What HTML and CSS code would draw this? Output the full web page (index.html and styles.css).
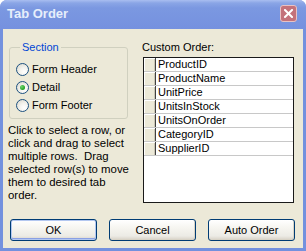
FILE: index.html
```html
<!DOCTYPE html>
<html lang="en">
<head>
    <meta charset="UTF-8">
    <title>Tab Order</title>
    <link rel="stylesheet" href="styles.css">
</head>
<body>
    <div class="window">
        <div class="titlebar">
            <span class="title">Tab Order</span>
            <span class="close">
                <svg width="9" height="9" viewBox="0 0 9 9">
                    <path d="M1 1 L8 8 M8 1 L1 8" stroke="#fff" stroke-width="2" stroke-linecap="square"/>
                </svg>
            </span>
        </div>

        <div class="client">
            <div class="top">
                <div class="left-col">
                    <fieldset class="group">
                        <legend>Section</legend>
                        <div class="radio-row"><span class="radio"></span>Form Header</div>
                        <div class="radio-row"><span class="radio checked"></span>Detail</div>
                        <div class="radio-row"><span class="radio"></span>Form Footer</div>
                    </fieldset>
                    <p class="help">Click to select a row, or<br>click and drag to select<br>multiple rows.&nbsp; Drag<br>selected row(s) to move<br>them to desired tab<br>order.</p>
                </div>

                <div class="right-col">
                    <div class="list-label">Custom Order:</div>
                    <div class="list">
                        <div class="row"><span class="sel"></span><span class="name">ProductID</span></div>
                        <div class="row"><span class="sel"></span><span class="name">ProductName</span></div>
                        <div class="row"><span class="sel"></span><span class="name">UnitPrice</span></div>
                        <div class="row"><span class="sel"></span><span class="name">UnitsInStock</span></div>
                        <div class="row"><span class="sel"></span><span class="name">UnitsOnOrder</span></div>
                        <div class="row"><span class="sel"></span><span class="name">CategoryID</span></div>
                        <div class="row"><span class="sel"></span><span class="name">SupplierID</span></div>
                    </div>
                </div>
            </div>

            <div class="buttons">
                <button class="btn default">OK</button>
                <button class="btn">Cancel</button>
                <button class="btn">Auto Order</button>
            </div>
        </div>
    </div>
</body>
</html>
```

FILE: styles.css
```css
body {
    margin: 0;
    background: #fff;
    font-family: "Liberation Sans", Arial, sans-serif;
    font-size: 11px;
    color: #000;
}
.window {
    width: 306px;
    height: 251px;
    box-sizing: border-box;
    background: #7391de;
    border-radius: 7px 7px 0 0;
    display: flex;
    flex-direction: column;
}
.titlebar {
    height: 29px;
    flex: none;
    display: flex;
    align-items: center;
    justify-content: space-between;
    padding: 0 9px 2px 7px;
    box-sizing: border-box;
    border-radius: 7px 7px 0 0;
    background: linear-gradient(#a9bef0 0, #8aa5e6 3px, #7b98e1 8px, #7591df 100%);
}
.title {
    font-weight: bold;
    font-size: 13px;
    color: #e6eefb;
}
.close {
    width: 17px;
    height: 17px;
    box-sizing: border-box;
    border: 1px solid #e8c2c4;
    border-radius: 3px;
    background: #c4727b;
    display: flex;
    align-items: center;
    justify-content: center;
}
.client {
    flex: 1;
    margin: 0 3px 3px 3px;
    background: #ece9d8;
    padding: 12px 0 0 5px;
    box-sizing: border-box;
}
.top {
    display: flex;
    gap: 14px;
}
.left-col {
    width: 120px;
}
.group {
    margin: 0 0 0 1px;
    padding: 6px 0 4px 6px;
    border: 1px solid #d0d0bf;
    border-radius: 3px;
    width: 119px;
    box-sizing: border-box;
}
.group legend {
    color: #0046d5;
    padding: 0 2px;
    margin-left: 4px;
    line-height: 13px;
}
.radio-row {
    display: flex;
    align-items: center;
    gap: 3px;
    height: 18px;
}
.radio {
    width: 13px;
    height: 13px;
    box-sizing: border-box;
    border: 1px solid #1c5180;
    border-radius: 50%;
    background: radial-gradient(circle at 65% 70%, #fff 0, #f4f3ee 40%, #d6d4c8 100%);
    display: flex;
    align-items: center;
    justify-content: center;
}
.radio.checked::after {
    content: "";
    width: 5px;
    height: 5px;
    border-radius: 50%;
    background: radial-gradient(circle at 35% 35%, #6ed46e, #21a121 70%);
}
.help {
    margin: 5px 0 0 0;
    line-height: 13px;
    white-space: nowrap;
    font-size: 11.4px;
}
.list-label {
    line-height: 13px;
}
.list {
    margin: 3px 0 0 1px;
    width: 151px;
    height: 146px;
    box-sizing: border-box;
    border: 1px solid #1a1a1a;
    background: #fff;
}
.row {
    display: flex;
    height: 14px;
    box-sizing: border-box;
    border-bottom: 1px solid #c8c8c8;
}
.sel {
    width: 12px;
    box-sizing: border-box;
    background: #ece9d8;
    border-right: 1px solid #404040;
    box-shadow: inset 1px 1px #fff, inset -1px 0 #c9c5b4;
}
.name {
    padding-left: 2px;
    line-height: 13px;
}
.buttons {
    display: flex;
    gap: 12px;
    margin-top: 16px;
    padding-left: 2px;
}
.btn {
    width: 87px;
    height: 22px;
    font-family: inherit;
    font-size: 11px;
    color: #000;
    border: 1px solid #003c74;
    border-radius: 3px;
    background: linear-gradient(#ffffff 0, #f6f5f0 40%, #ecebe5 80%, #d6d0c5 100%);
    box-shadow: inset -1px -1px #d8d3c6;
    padding: 0;
}
.btn.default {
    box-shadow: inset 0 0 0 1px #b3c7f0, inset 0 -1px 0 1px #8aa0e4;
}
```
